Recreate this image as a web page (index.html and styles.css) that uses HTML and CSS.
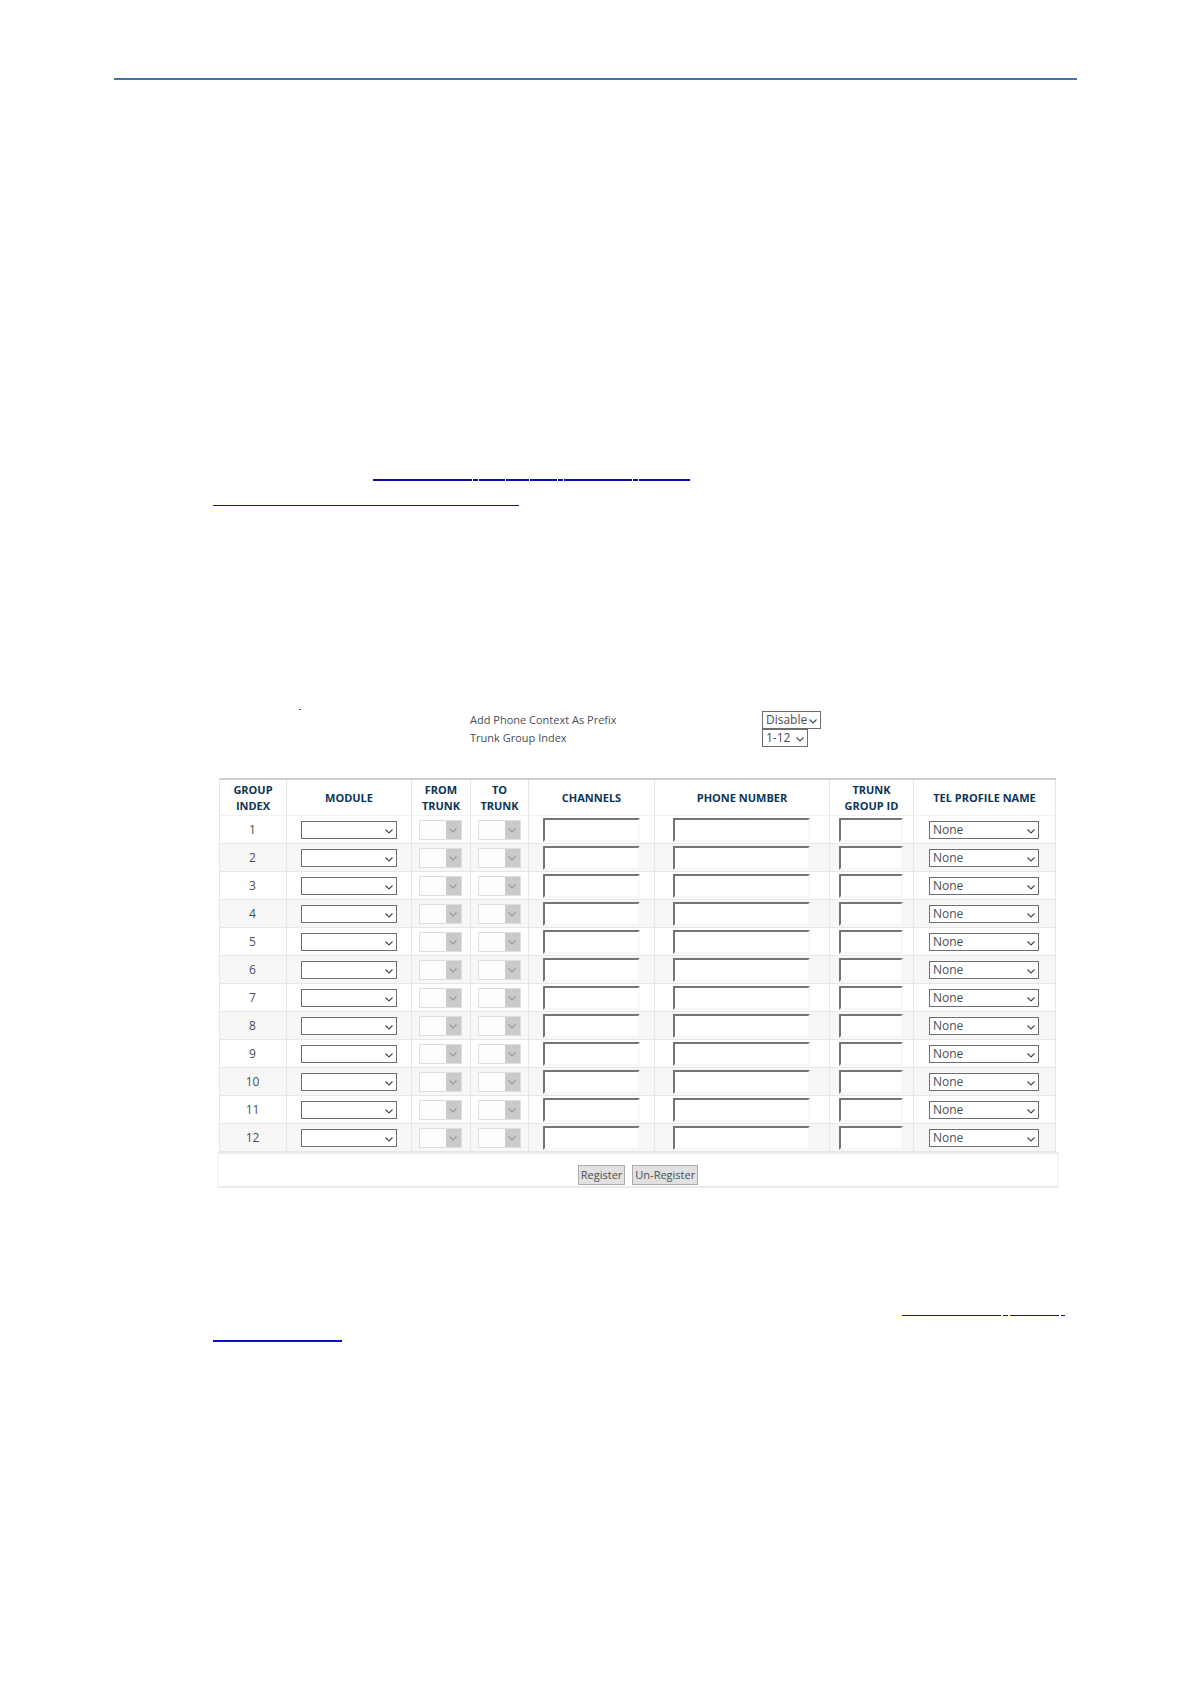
FILE: index.html
```
<!DOCTYPE html>
<html lang="en">
<head>
    <meta charset="UTF-8">
    <meta name="viewport" content="width=device-width, initial-scale=1.0">
    <title>Trunk Group</title>
    <link rel="stylesheet" href="styles.css">
</head>
<body>
    <div class="page">
        <hr class="page-rule">

        <div class="content">
            <p class="link-line link-line-first">
                <a href="#" class="ref-link thick">
                    <span class="w-99"></span><span class="w-5"></span><span class="w-26"></span><span class="w-23"></span><span class="w-27"></span><span class="w-5"></span><span class="w-68"></span><span class="w-5"></span><span class="w-51"></span>
                </a>
            </p>
            <p class="link-line link-line-second">
                <a href="#" class="ref-link"><span class="w-306"></span></a>
            </p>

            <form class="trunk-form">
                <span class="mark"></span>
                <div class="settings">
                    <label for="prefix">Add Phone Context As Prefix</label>
                    <select id="prefix" class="select select-prefix">
                        <option>Disable</option>
                        <option>Enable</option>
                    </select>
                    <label for="group-index">Trunk Group Index</label>
                    <select id="group-index" class="select select-index">
                        <option>1-12</option>
                        <option>13-24</option>
                    </select>
                </div>

                <table class="trunk-table">
                    <colgroup>
                        <col class="col-index">
                        <col class="col-module">
                        <col class="col-from">
                        <col class="col-to">
                        <col class="col-channels">
                        <col class="col-phone">
                        <col class="col-id">
                        <col class="col-profile">
                    </colgroup>
                    <thead>
                        <tr>
                            <th>GROUP<br>INDEX</th>
                            <th>MODULE</th>
                            <th>FROM<br>TRUNK</th>
                            <th>TO<br>TRUNK</th>
                            <th>CHANNELS</th>
                            <th>PHONE NUMBER</th>
                            <th>TRUNK<br>GROUP ID</th>
                            <th>TEL PROFILE NAME</th>
                        </tr>
                    </thead>
                    <tbody id="trunk-rows"></tbody>
                </table>

                <div class="actions">
                    <button type="button">Register</button>
                    <button type="button">Un-Register</button>
                </div>
            </form>

            <p class="link-line link-line-third">
                <a href="#" class="ref-link wide-gap">
                    <span class="w-99"></span><span class="w-5"></span><span class="w-49"></span><span class="w-4"></span>
                </a>
            </p>
            <p class="link-line link-line-fourth">
                <a href="#" class="ref-link thick bright"><span class="w-129"></span></a>
            </p>
        </div>
    </div>

    <script>
        const rows = document.getElementById('trunk-rows');

        for (let i = 1; i <= 12; i++) {
            rows.innerHTML += `
                <tr>
                    <td>${i}</td>
                    <td><select class="select select-module" aria-label="Module"><option></option></select></td>
                    <td><select class="select select-trunk" aria-label="From trunk" disabled><option></option></select></td>
                    <td><select class="select select-trunk" aria-label="To trunk" disabled><option></option></select></td>
                    <td><input type="text" class="input-channels" aria-label="Channels"></td>
                    <td><input type="text" class="input-phone" aria-label="Phone number"></td>
                    <td><input type="text" class="input-id" aria-label="Trunk group ID"></td>
                    <td><select class="select select-profile" aria-label="Tel profile name"><option>None</option></select></td>
                </tr>
            `;
        }
    </script>
</body>
</html>
```
FILE: styles.css
```
* {
    box-sizing: border-box;
}

body {
    font-family: 'Open Sans', sans-serif;
    font-size: 12px;
    line-height: 16px;
    background-color: #fff;
    margin: 0;
    color: #4a4f57;
}

.page {
    padding: 78px 114px 40px;
}

.page-rule {
    height: 2px;
    margin: 0;
    border: none;
    background-color: #4672a6;
}

.content {
    padding: 387px 12px 0 99px;
}

/* reference links */
.link-line {
    display: flex;
    align-items: flex-end;
    height: 14px;
    margin: 0;
}

.link-line-first {
    padding-left: 160px;
}

.link-line-second {
    margin-top: 11px;
}

.link-line-third {
    justify-content: flex-end;
    margin-top: 114px;
}

.link-line-fourth {
    margin-top: 12px;
}

.ref-link {
    display: flex;
    gap: 1px;
}

.ref-link.wide-gap {
    gap: 2px;
}

.ref-link span {
    height: 12px;
    border-bottom: 1px solid #1a0f8c;
}

.ref-link.thick span {
    border-bottom: 2px solid #0d0da6;
}

.ref-link.bright span {
    border-bottom-color: #0a0acd;
}

.w-4 { width: 4px; }
.w-5 { width: 5px; }
.w-23 { width: 23px; }
.w-26 { width: 26px; }
.w-27 { width: 27px; }
.w-49 { width: 49px; }
.w-51 { width: 51px; }
.w-68 { width: 68px; }
.w-99 { width: 99px; }
.w-129 { width: 129px; }
.w-306 { width: 306px; }

/* trunk group form */
.trunk-form {
    margin: 203px 6px 0 4px;
}

.mark {
    display: block;
    width: 2px;
    height: 1px;
    margin-left: 82px;
    background-color: #555;
}

.settings {
    display: grid;
    grid-template-columns: 292px auto;
    grid-auto-rows: 18px;
    justify-content: start;
    align-items: center;
    margin: 1px 0 31px 253px;
}

.settings label {
    font-size: 11px;
}

.select {
    display: block;
    height: 18px;
    margin: 0 auto;
    padding: 0 0 1px 3px;
    border: 1px solid #6e6e72;
    border-radius: 0;
    appearance: none;
    font: inherit;
    color: #4a4f57;
    background: #fff url("data:image/svg+xml,%3Csvg xmlns='http://www.w3.org/2000/svg' width='8' height='5'%3E%3Cpath d='M.5.5 4 4 7.5.5' fill='none' stroke='%23444' stroke-width='1.1'/%3E%3C/svg%3E") no-repeat right 3px top 7px;
}

.settings .select {
    margin: 0;
}

.select-prefix {
    width: 59px;
}

.select-index {
    width: 46px;
}

.select-module {
    width: 96px;
}

.select-profile {
    width: 110px;
}

.select-trunk {
    width: 43px;
    height: 20px;
    border-color: #dedede;
    opacity: 1;
    background:
        url("data:image/svg+xml,%3Csvg xmlns='http://www.w3.org/2000/svg' width='8' height='5'%3E%3Cpath d='M.5.5 4 4 7.5.5' fill='none' stroke='%23999' stroke-width='1.1'/%3E%3C/svg%3E") no-repeat right 4px top 7px,
        linear-gradient(#cacaca, #cacaca) no-repeat right top / 15px 100%,
        #fdfdfd;
}

.trunk-table {
    width: calc(100% - 5px);
    margin-left: 2px;
    table-layout: fixed;
    border-collapse: separate;
    border-spacing: 0;
    border-top: 2px solid #cfcfcf;
    border-left: 1px solid #e6e6e6;
}

.col-index { width: 67px; }
.col-module { width: 125px; }
.col-from { width: 59px; }
.col-to { width: 58px; }
.col-channels { width: 126px; }
.col-phone { width: 175px; }
.col-id { width: 84px; }
.col-profile { width: 142px; }

.trunk-table th,
.trunk-table td {
    padding: 0;
    border-right: 1px solid #e6e6e6;
    border-bottom: 1px solid #e6e6e6;
    text-align: center;
    vertical-align: middle;
}

.trunk-table th {
    height: 36px;
    border-bottom-color: #f2f2f2;
    font-size: 11px;
    color: #0c3557;
}

.trunk-table td {
    height: 28px;
    padding-right: 1px;
}

.trunk-table tbody tr:nth-child(even) {
    background-color: #f7f7f7;
}

.trunk-table input {
    display: block;
    height: 24px;
    margin: 0 auto;
    padding: 0 2px;
    border: 2px solid;
    border-color: #757575 #f7f7f7 #f7f7f7 #757575;
    font: inherit;
    background-color: #fff;
}

.trunk-table .input-channels {
    width: 97px;
}

.trunk-table .input-phone {
    width: 137px;
}

.trunk-table .input-id {
    width: 64px;
}

.actions {
    display: flex;
    justify-content: center;
    gap: 7px;
    padding: 11px 0 1px;
    border: 2px solid #f5f5f5;
    border-top-color: #ebebeb;
    border-bottom-color: #ebebeb;
}

.actions button {
    height: 20px;
    padding: 0 2px;
    border: 1px solid #ababab;
    font: inherit;
    font-size: 11px;
    color: #4a4f57;
    background-color: #e1e1e1;
}
```
